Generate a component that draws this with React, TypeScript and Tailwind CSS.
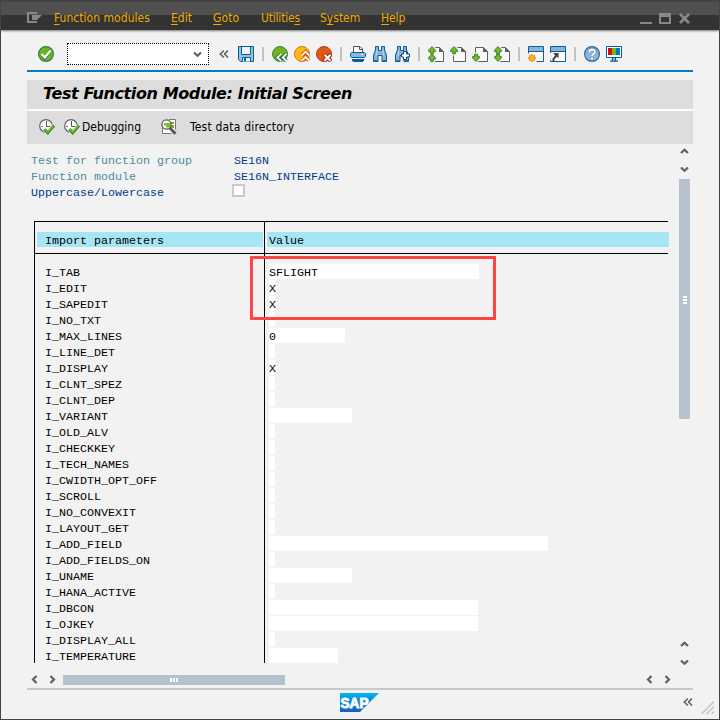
import React from "react";

const tahoma = "font-['DejaVu_Sans_Condensed','DejaVu_Sans',sans-serif] [font-stretch:condensed]";
const mono = "font-['Liberation_Mono',monospace] text-[11.67px] leading-[18px] whitespace-pre";

function Icon({ children, size = 16, className = "" }: { children: React.ReactNode; size?: number; className?: string }) {
  return (
    <svg width={size} height={size} viewBox={`0 0 ${size} ${size}`} className={`shrink-0 ${className}`} fill="none">
      {children}
    </svg>
  );
}

const CheckIcon = () => (
  <Icon>
    <circle cx="8" cy="8" r="7.4" fill="#6cb51c" stroke="#3d7d4c" strokeWidth="1.2" />
    <path d="M3.5 8.3 6.8 11.6 12.6 4.6" stroke="#3d7d4c" strokeWidth="3.6" />
    <path d="M3.5 8 6.8 11.3 12.6 4.4" stroke="#fff" strokeWidth="2.4" />
  </Icon>
);

const SaveIcon = () => (
  <Icon>
    <path d="M.5.5h15v15H2.5L.5 13.5Z" fill="#9ebddc" stroke="#00629b" />
    <path d="M3.5 1v7.5h9V1" fill="#f2f5f8" stroke="#00629b" />
    <path d="M4.5 15.5v-4h8v4" fill="#f2f5f8" stroke="#00629b" />
    <path d="M6 12h2v3H6z" fill="#00629b" />
  </Icon>
);

const BackIcon = () => (
  <Icon>
    <circle cx="8" cy="8" r="7.5" fill="#6fb41c" stroke="#3f8447" />
    <path d="m9 8-3.5 3.5L9 15M14.3 8l-3.5 3.5 3.5 3.5" stroke="#3b7550" strokeWidth="3.8" />
    <path d="M9.2 7.8 5.5 11.5 9.2 15.2M14.5 7.8l-3.7 3.7 3.7 3.7" stroke="#fff" strokeWidth="1.7" />
  </Icon>
);

const ExitIcon = () => (
  <Icon>
    <circle cx="8" cy="8" r="7.5" fill="#fdbc14" stroke="#e96d0b" />
    <path d="M8 9.2 11.5 5.7 15 9.2M8 14.5l3.5-3.5 3.5 3.5" stroke="#df5712" strokeWidth="3.8" />
    <path d="m7.8 9.4 3.7-3.7 3.7 3.7M7.8 14.7l3.7-3.7 3.7 3.7" stroke="#fff" strokeWidth="1.7" />
  </Icon>
);

const CancelIcon = () => (
  <Icon>
    <circle cx="8" cy="8" r="7.5" fill="#dc5a13" stroke="#b93c12" />
    <path d="m8 8.2 7 7m0-7-7 7" stroke="#a92b16" strokeWidth="4" />
    <path d="m8.5 8.7 6 6m0-6-6 6" stroke="#fff" strokeWidth="2" />
  </Icon>
);

const PrintIcon = () => (
  <Icon>
    <path d="M3.5 7V.5H10L12.5 3v4" fill="#fff" stroke="#555" />
    <path d="M9.5 1v2.5H12" stroke="#555" />
    <path d="M1.5 6.5h13l1 1v3l-1 1h-13l-1-1v-3Z" fill="#8db4da" stroke="#00629b" />
    <path d="M11 8.5h2" stroke="#fff" />
    <path d="M2 13h12v1.5L12.5 16h-9L2 14.5Z" fill="#00629b" />
  </Icon>
);

const Lens = () => (
  <>
    <path d="M3.5.5h3v4h3v-4h3V4l2 5v6.5H10v-6H6v6H1.5V9l2-5Z" fill="#8eb3d9" stroke="#00629b" />
    <path d="M4.5 4.5v5M11.5 4.5v5" stroke="#bdd2e9" />
    <path d="M2 14.5h3.5m5 0H14" stroke="#376fa5" />
  </>
);
const FindIcon = () => <Icon><Lens /></Icon>;
const FindNextIcon = () => (
  <Icon>
    <Lens />
    <path d="M9.5 5.5h3V8h3v3h-3v2.500h-3V11h-2V8h2Z" fill="#fff" stroke="#193c7b" />
  </Icon>
);

const upArrow = "M4 .6 7.3 4v1.6H5.4v2.2H2.6V5.6H.7V4Z";
function PageIcon({ arrows }: { arrows: string[] }) {
  return (
    <Icon>
      <path d="M3.5 1.5h8l4 4v10h-12Z" fill="#fafafa" stroke="#5f5f5f" />
      <path d="M11 1v5h5Z" fill="#5f5f5f" />
      <g stroke="#f2f2f2" strokeWidth="3.4">{arrows.map((t, i) => <path key={i} d={upArrow} transform={t} />)}</g>
      <g fill="#75bb20" stroke="#3d803c">{arrows.map((t, i) => <path key={i} d={upArrow} transform={t} />)}</g>
    </Icon>
  );
}

const WindowFrame = () => (
  <>
    <path d="M.5.5h15v15H.5Z" fill="#fff" stroke="#00629b" />
    <path d="M1 1h14v4H1Z" fill="#8db1d8" />
    <path d="M1 5.5h14" stroke="#00629b" />
  </>
);
const NewSessionIcon = () => (
  <Icon>
    <WindowFrame />
    <path d="M0 7.5h8.5V16H0Z" fill="#f2f2f2" />
    <path d="M4 8v8M0 12h8M1.2 9.2l5.6 5.6m0-5.6-5.6 5.6" stroke="#f28a0c" strokeWidth="1.5" />
    <circle cx="4" cy="12" r="2.4" fill="#fdb813" stroke="#f59a10" />
  </Icon>
);
const ShortcutIcon = () => (
  <Icon>
    <WindowFrame />
    <path d="M0 7h2v7H0Z" fill="#f2f2f2" />
    <path d="M3 7h5.5v5.5L6.8 10.8 4.5 13v2h-2v-2.5l2.7-3.3Z" fill="#444" />
  </Icon>
);
const HelpIcon = () => (
  <Icon>
    <circle cx="8" cy="8" r="7.4" fill="#8fb4da" stroke="#286c9e" strokeWidth="1.2" />
    <path d="M5.2 6.2c.1-3.9 6-3.8 5.9-.3 0 2-2.9 1.9-2.9 4.2M8.2 11.5v2" stroke="#4c7dac" strokeWidth="3" />
    <path d="M5.2 6.2c.1-3.7 5.8-3.6 5.7-.3 0 2-2.8 1.9-2.8 4.2M8.1 11.4v2" stroke="#fff" strokeWidth="2" />
  </Icon>
);
const MonitorIcon = () => (
  <Icon>
    <path d="M.5.5h15v11H.5Z" fill="#fff" stroke="#00629b" />
    <path d="M2 2h4v7H2Z" fill="#d00b0b" />
    <path d="M6 2h4v7H6Z" fill="#75b51b" />
    <path d="M10 2h4v7h-4Z" fill="#0079c1" />
    <path d="M7 12h2v2H7Z" fill="#9bc" />
    <path d="M6.5 12v2.5M9.5 12v2.5M4 15.2h8" stroke="#00629b" strokeWidth="1.3" />
  </Icon>
);

const ExecuteIcon = () => (
  <Icon>
    <circle cx="7" cy="7" r="6.3" fill="#fff" stroke="#626262" strokeWidth="1.2" />
    <path d="M7.5 2v5.5h4M2.2 7.5h1.6M7.5 10v2" stroke="#555" />
    <path d="m5.3 10.2 3.5 3.7 6-7" stroke="#f5f5f5" strokeWidth="4.3" />
    <path d="m5.2 10.2 3.6 3.7 6.2-7.3" stroke="#327d32" strokeWidth="3" />
    <path d="m5.4 10 3.4 3.3 5.6-6.4" stroke="#76bb22" strokeWidth="1.5" />
  </Icon>
);
const TestDataIcon = () => (
  <Icon>
    <path d="M8 .5h6.500v10M1.500 9v5.500h9" fill="#fff" stroke="#777" />
    <path d="M8 1h6v9l-4 4H2V9Z" fill="#fff" />
    <path d="M9 3h4v2H9zM9 6h4v3H9z" fill="#75b51b" />
    <circle cx="5.5" cy="5.5" r="4.6" fill="#fff" stroke="#5a5a5a" strokeWidth="1.3" />
    <path d="M3 4h6v4.500H5V6.500H3z" fill="#7abf20" />
    <path d="m8.8 9 5.700 5.700" stroke="#555" strokeWidth="2.8" />
  </Icon>
);

const Sep = () => <div className="mx-2 h-[14px] w-[2px] shrink-0 bg-[#c1c1c1]" />;

const chevrons = {
  up: "M1 6 4.5 2.7 8 6",
  down: "M1 2.5 4.5 5.8 8 2.5",
  left: "M6.5 1 3 4.5 6.5 8",
  right: "M2.5 1 6 4.5 2.5 8",
};
function Chevron({ dir, className = "" }: { dir: keyof typeof chevrons; className?: string }) {
  return <Icon size={9} className={className}><path d={chevrons[dir]} stroke="#606060" strokeWidth="2.2" /></Icon>;
}
function DoubleLeft({ className = "" }: { className?: string }) {
  return <Icon size={10} className={className}><path d="M4.8 1.5 1.3 5l3.5 3.5M9 1.5 5.5 5 9 8.5" stroke="#5c5c5c" strokeWidth="1.5" /></Icon>;
}

const menus = [
  { pre: "", key: "F", post: "unction modules", w: "w-[117px]", ls: "tracking-[0.03px]" },
  { pre: "", key: "E", post: "dit", w: "w-[42px]", ls: "" },
  { pre: "", key: "G", post: "oto", w: "w-[48px]", ls: "tracking-[0.1px]" },
  { pre: "Utilitie", key: "s", post: "", w: "w-[59px]", ls: "tracking-[-0.2px]" },
  { pre: "S", key: "y", post: "stem", w: "w-[61px]", ls: "" },
  { pre: "", key: "H", post: "elp", w: "", ls: "tracking-[-0.1px]" },
];

const rows: [string, string, string][] = [
  ["I_TAB", "SFLIGHT", "w-[210px]"],
  ["I_EDIT", "X", "w-[6px]"],
  ["I_SAPEDIT", "X", "w-[6px]"],
  ["I_NO_TXT", "", "w-[6px]"],
  ["I_MAX_LINES", "0", "w-[76px]"],
  ["I_LINE_DET", "", "w-[6px]"],
  ["I_DISPLAY", "X", "w-[6px]"],
  ["I_CLNT_SPEZ", "", "w-[6px]"],
  ["I_CLNT_DEP", "", "w-[6px]"],
  ["I_VARIANT", "", "w-[83px]"],
  ["I_OLD_ALV", "", "w-[6px]"],
  ["I_CHECKKEY", "", "w-[6px]"],
  ["I_TECH_NAMES", "", "w-[6px]"],
  ["I_CWIDTH_OPT_OFF", "", "w-[6px]"],
  ["I_SCROLL", "", "w-[6px]"],
  ["I_NO_CONVEXIT", "", "w-[6px]"],
  ["I_LAYOUT_GET", "", "w-[6px]"],
  ["I_ADD_FIELD", "", "w-[279px]"],
  ["I_ADD_FIELDS_ON", "", "w-[6px]"],
  ["I_UNAME", "", "w-[83px]"],
  ["I_HANA_ACTIVE", "", "w-[6px]"],
  ["I_DBCON", "", "w-[209px]"],
  ["I_OJKEY", "", "w-[209px]"],
  ["I_DISPLAY_ALL", "", "w-[6px]"],
  ["I_TEMPERATURE", "", "w-[69px]"],
];

function TitleBar() {
  return (
    <header className={`flex h-7 shrink-0 items-center bg-[linear-gradient(#505050_13px,#333_13px)] pl-[26px] ${tahoma} text-[12px] text-[#f0ab00] shadow-[0_1px_2px_#777]`}>
      <svg width="15" height="12" viewBox="0 0 15 12" className="mr-3 mt-[3px] shrink-0" fill="none">
        <path d="M10 1H1v9h8V9" stroke="#888" strokeWidth="2" />
        <path d="M5 3h10l-5 5H5Z" fill="#888" />
      </svg>
      {menus.map((m) => (
        <span key={m.pre + m.key} className={`mt-[4px] shrink-0 whitespace-nowrap leading-[16px] ${m.w} ${m.ls}`}>
          {m.pre}<span className="underline decoration-1 underline-offset-2 [text-decoration-skip-ink:none]">{m.key}</span>{m.post}
        </span>
      ))}
      <svg width="50" height="14" viewBox="0 0 50 14" className="ml-auto mr-[29px] mt-[6px] shrink-0" fill="none" stroke="#888">
        <path d="M0 11h12" strokeWidth="2" />
        <path d="M20 3v8h10V3" strokeWidth="2" />
        <path d="M19 3h12" strokeWidth="4" />
        <path d="m40 2 9 9m0-9-9 9" strokeWidth="2.7" />
      </svg>
    </header>
  );
}

function StandardToolbar() {
  return (
    <div className="mx-[26px] flex h-[42px] shrink-0 items-center border-b-2 border-[#007cc0] pl-[11px] pt-2">
      <CheckIcon />
      <div className="ml-[13px] flex h-[22px] w-[142px] shrink-0 items-center justify-end border border-dotted border-black bg-white pr-[6px]">
        <Chevron dir="down" />
      </div>
      <DoubleLeft className="ml-[10px] mr-[9px]" />
      <SaveIcon />
      <Sep />
      <div className="flex gap-[6px]"><BackIcon /><ExitIcon /><CancelIcon /></div>
      <Sep />
      <div className="flex gap-[6px]"><PrintIcon /><FindIcon /><FindNextIcon /></div>
      <Sep />
      <div className="flex gap-[6px]">
        <PageIcon arrows={["", "matrix(1 0 0 1 0 7.5)"]} />
        <PageIcon arrows={[""]} />
        <PageIcon arrows={["matrix(1 0 0 -1 0 16)"]} />
        <PageIcon arrows={["", "matrix(1 0 0 -1 0 16)"]} />
      </div>
      <Sep />
      <div className="flex gap-[6px]"><NewSessionIcon /><ShortcutIcon /></div>
      <Sep />
      <div className="flex gap-[6px]"><HelpIcon /><MonitorIcon /></div>
    </div>
  );
}

function ParameterTable() {
  return (
    <div className="ml-[33px] mt-[21px] w-[635px]">
      <div className="flex h-[33px]">
        <div className="flex w-[231px] items-center border border-black pl-[2px] pr-px pt-[5px]">
          <div className={`mb-[1px] h-[15px] w-full bg-[#a6e6f4] pl-2 ${mono}`}>Import parameters</div>
        </div>
        <div className="mr-px flex grow items-center border-y border-black pl-[2px] pt-[5px]">
          <div className={`-mr-px mb-[1px] h-[15px] grow bg-[#a6e6f4] pl-[2px] ${mono}`}>Value</div>
        </div>
      </div>
      <div className="relative flex h-[409px]">
        <div className={`w-[231px] border-x border-black pl-[10px] pt-[10px] ${mono}`}>
          {rows.map(([name]) => <div key={name} className="h-4">{name}</div>)}
        </div>
        <div className={`pl-1 pt-[10px] ${mono}`}>
          {rows.map(([name, value, w]) => (
            <div key={name} className={`mb-px h-[15px] bg-white ${w}`}>{value}</div>
          ))}
        </div>
        <div className="absolute left-[216px] top-[2px] h-16 w-[246px] border-[3px] border-[#ff4444]" />
      </div>
    </div>
  );
}

export default function App() {
  return (
    <div className="flex h-[720px] w-[720px] flex-col overflow-hidden border border-t-2 border-[#444] bg-[#f2f2f2] text-black">
      <TitleBar />
      <StandardToolbar />
      <div className="mx-[26px] mt-2 flex h-[29px] shrink-0 items-center whitespace-nowrap bg-[#ddd] pl-[16px] font-['DejaVu_Sans',sans-serif] text-[16px] font-bold italic leading-5">
        <span className="-mt-[2px] tracking-[-0.39px]">Test Function Module: Initial Screen</span>
      </div>
      <div className="ml-7 mr-[26px] h-[2px] shrink-0 bg-white" />
      <div className={`mx-[26px] flex h-[33px] shrink-0 items-center bg-[#ddd] pb-[2px] pl-3 ${tahoma} whitespace-nowrap text-[12px]`}>
        <ExecuteIcon />
        <span className="w-[9px]" />
        <ExecuteIcon />
        <span className="ml-[2px] w-[79px]">Debugging</span>
        <TestDataIcon />
        <span className="ml-[13px] tracking-[0.2px]">Test data directory</span>
      </div>
      <main className="flex h-[519px] shrink-0">
        <div className="w-[668px]">
          <div className={`ml-[30px] mt-2 grid grid-cols-[203px_1fr] grid-rows-[16px_16px_16px] ${mono} text-[#003c8c]`}>
            <span className="text-[#4c8c9c]">Test for function group</span><span>SE16N</span>
            <span className="text-[#4c8c9c]">Function module</span><span>SE16N_INTERFACE</span>
            <span>Uppercase/Lowercase</span>
            <span className="-ml-[2px] h-[13px] w-[13px] border-2 border-[#c9c9c9] bg-white" />
          </div>
          <ParameterTable />
        </div>
        <div className="ml-[10px] flex w-[11px] flex-col items-center">
          <Chevron dir="up" className="mt-[3px]" />
          <Chevron dir="down" className="mt-[9px]" />
          <div className="mt-[5px] flex h-[240px] w-[11px] shrink-0 flex-col items-center justify-center gap-px bg-[#b6c2ce] pt-[2px]">
            <i className="h-[2px] w-1 bg-white" /><i className="h-[2px] w-1 bg-white" /><i className="h-[2px] w-1 bg-white" />
          </div>
          <Chevron dir="up" className="mt-auto" />
          <Chevron dir="down" className="mb-[-4px] mt-[9px]" />
        </div>
      </main>
      <div className="mx-[26px] flex h-[27px] shrink-0 items-center border-b-2 border-[#c8c8c8] pl-[3px] pt-[7px]">
        <Chevron dir="left" />
        <Chevron dir="right" className="ml-[9px]" />
        <div className="ml-[6px] mt-[1px] flex h-[10px] w-[222px] items-center justify-center gap-px bg-[#b6c2ce]">
          <i className="h-1 w-[2px] bg-white" /><i className="h-1 w-[2px] bg-white" /><i className="h-1 w-[2px] bg-white" />
        </div>
        <Chevron dir="left" className="ml-auto" />
        <Chevron dir="right" className="ml-[9px] mr-[21px]" />
      </div>
      <footer className="flex grow items-start pl-[339px] pt-[3px]">
        <svg width="40" height="19" viewBox="0 0 40 19">
          <defs>
            <linearGradient id="sap" x1="0" y1="0" x2="0" y2="1"><stop offset="0" stopColor="#00b4ee" /><stop offset="1" stopColor="#1c5cbf" /></linearGradient>
          </defs>
          <path d="M0 0h39L20 19H0Z" fill="url(#sap)" />
          <text x=".5" y="14.5" textLength="28" lengthAdjust="spacingAndGlyphs" fontFamily="Liberation Sans, sans-serif" fontWeight="700" fontSize="15.5" fill="#fff" stroke="#fff" strokeWidth=".9">SAP</text>
        </svg>
        <DoubleLeft className="ml-auto mt-[4px]" />
        <svg width="14" height="14" viewBox="0 0 14 14" className="ml-[8px] mr-[4px] mt-2" stroke="#c6c6c6" strokeWidth="1.7">
          <path d="M.5 13 13 .5M5.5 13 13 5.5M10.5 13l2.5-2.5" />
        </svg>
      </footer>
    </div>
  );
}
